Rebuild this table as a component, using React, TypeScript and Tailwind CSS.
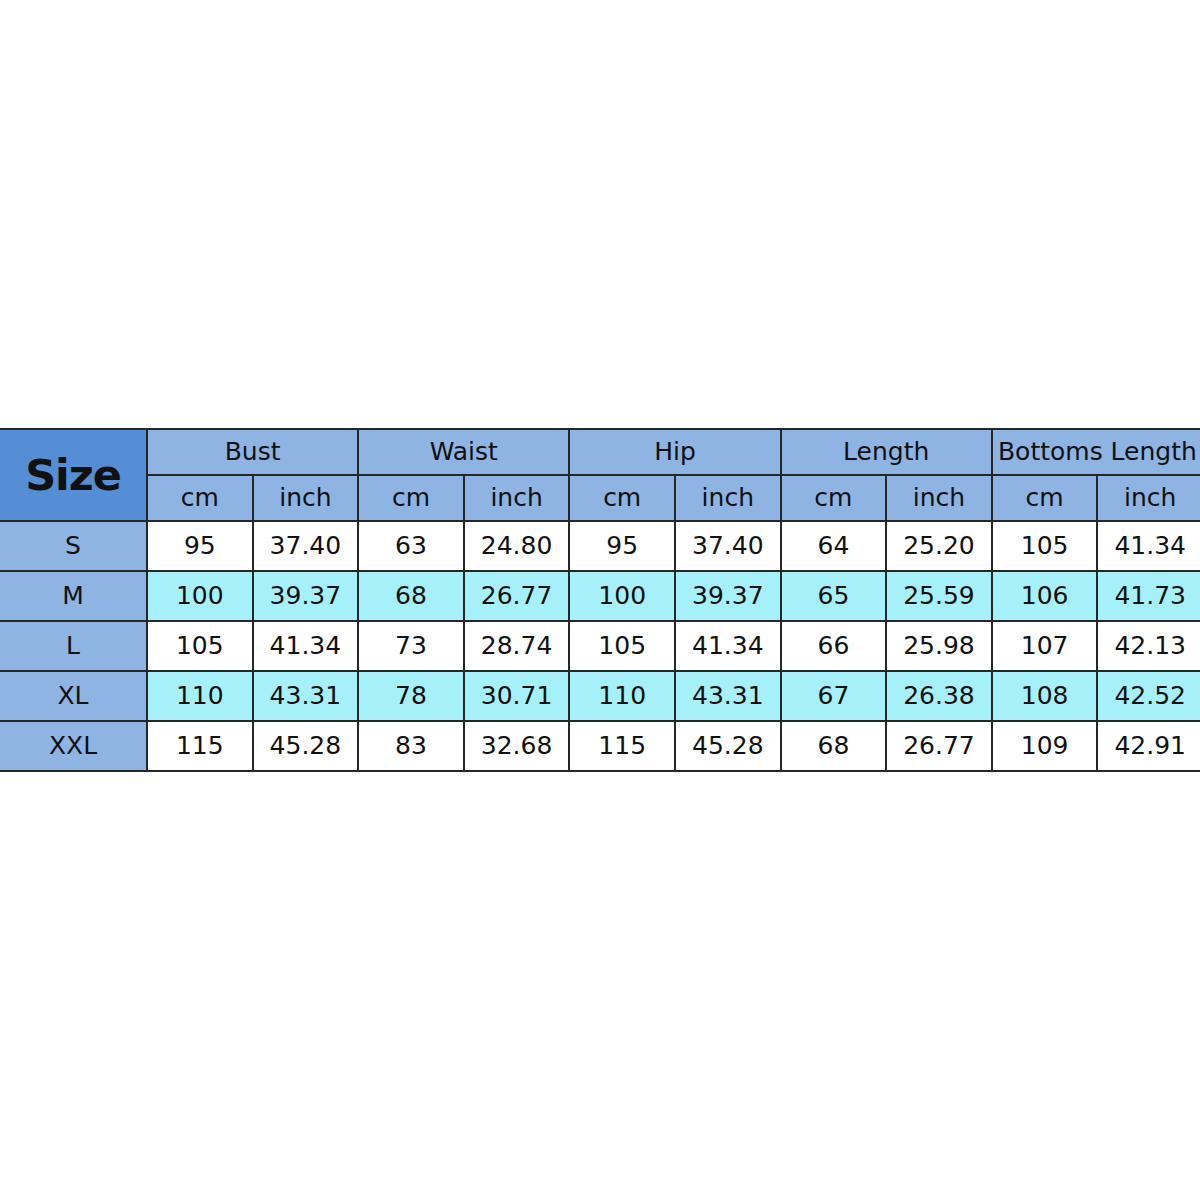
import React from "react";

const groups = ["Bust", "Waist", "Hip", "Length", "Bottoms Length"];
const rows: [string, string[]][] = [
  ["S", ["95", "37.40", "63", "24.80", "95", "37.40", "64", "25.20", "105", "41.34"]],
  ["M", ["100", "39.37", "68", "26.77", "100", "39.37", "65", "25.59", "106", "41.73"]],
  ["L", ["105", "41.34", "73", "28.74", "105", "41.34", "66", "25.98", "107", "42.13"]],
  ["XL", ["110", "43.31", "78", "30.71", "110", "43.31", "67", "26.38", "108", "42.52"]],
  ["XXL", ["115", "45.28", "83", "32.68", "115", "45.28", "68", "26.77", "109", "42.91"]],
];

export default function App() {
  return (
    <div className="w-[1200px] h-[1200px] bg-white flex flex-col justify-center overflow-hidden">
      <div
        className="grid w-[1204px] grid-cols-[148px_repeat(10,1fr)] grid-rows-[46px_46px_50px_50px_50px_50px_50px] border-t-2 border-[#262626] text-[25px] text-[#111]"
        style={{ fontFamily: '"DejaVu Sans", sans-serif' }}
      >
        <div className="row-span-2 bg-[#558ed5] border-r-2 border-b-2 border-[#262626] flex items-center justify-center font-bold text-[43px] tracking-tight">
          Size
        </div>
        {groups.map((g) => (
          <div
            key={g}
            className="col-span-2 bg-[#8eb4e3] border-r-2 border-b-2 border-[#262626] flex items-center justify-center whitespace-nowrap"
          >
            {g}
          </div>
        ))}
        {groups.map((g) => (
          <React.Fragment key={g + "u"}>
            <div className="bg-[#8eb4e3] border-r-2 border-b-2 border-[#262626] flex items-center justify-center">cm</div>
            <div className="bg-[#8eb4e3] border-r-2 border-b-2 border-[#262626] flex items-center justify-center">inch</div>
          </React.Fragment>
        ))}
        {rows.map(([size, vals], i) => (
          <React.Fragment key={size}>
            <div className="bg-[#8eb4e3] border-r-2 border-b-2 border-[#262626] flex items-center justify-center">
              {size}
            </div>
            {vals.map((v, j) => (
              <div
                key={j}
                className={`${i % 2 === 1 ? "bg-[#a6f0f9]" : "bg-white"} border-r-2 border-b-2 border-[#262626] flex items-center justify-center`}
              >
                {v}
              </div>
            ))}
          </React.Fragment>
        ))}
      </div>
    </div>
  );
}
